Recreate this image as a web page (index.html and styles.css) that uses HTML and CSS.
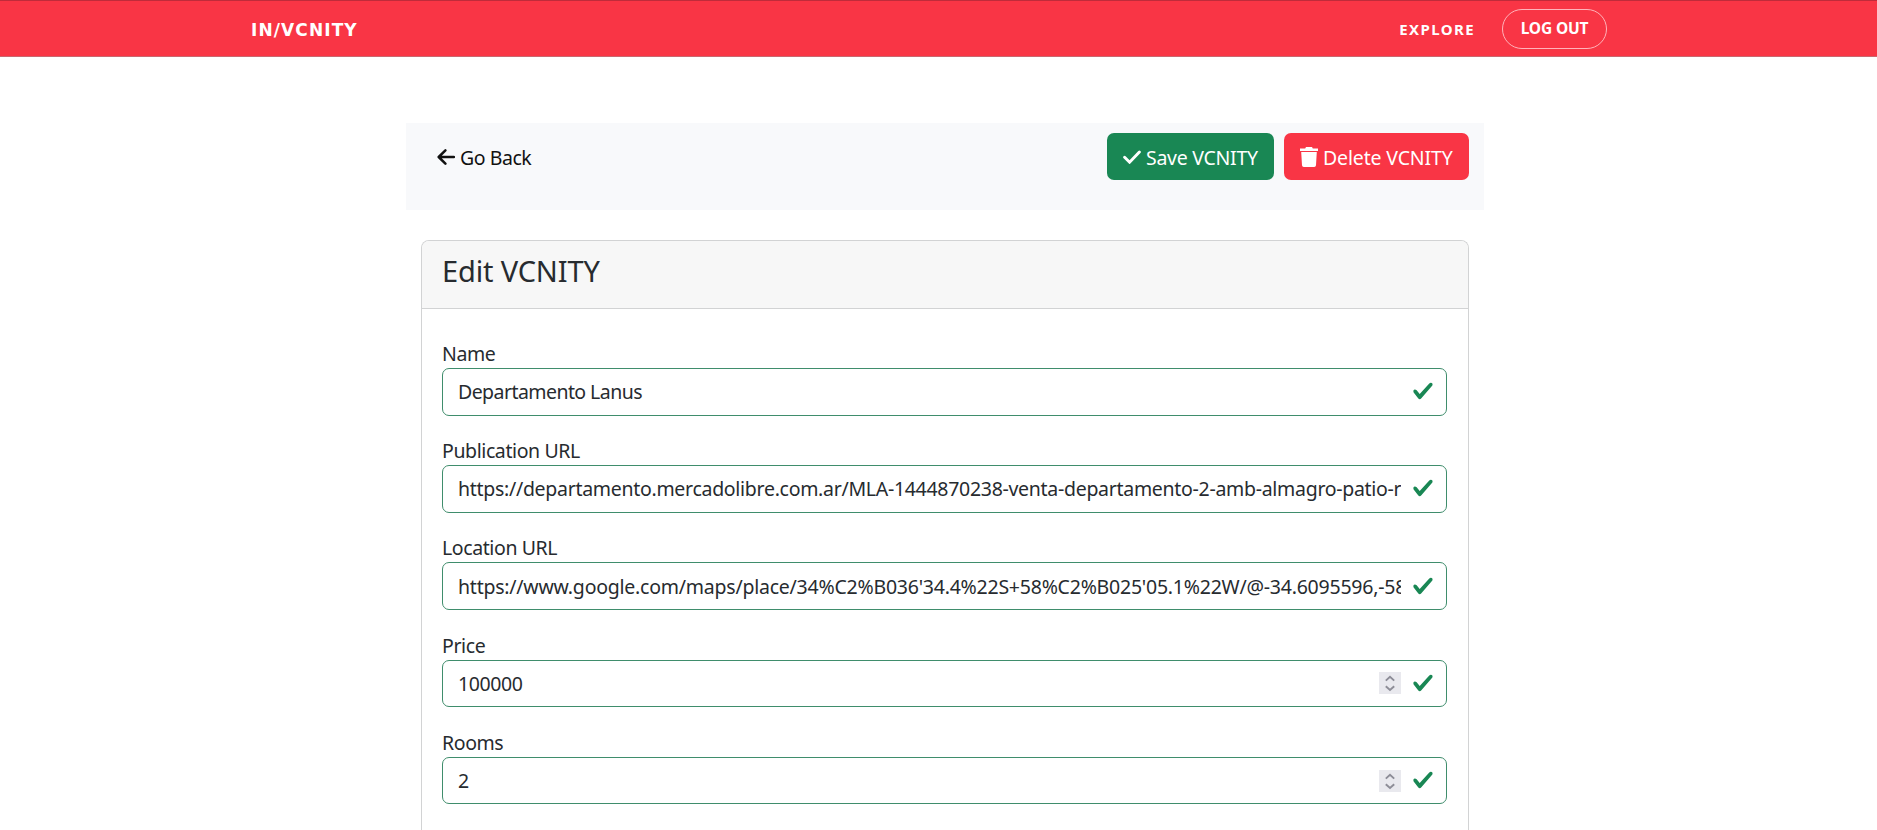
FILE: index.html
```html
<!DOCTYPE html>
<html lang="en">
<head>
<meta charset="utf-8">
<title>IN/VCNITY</title>
<link rel="stylesheet" href="styles.css">
</head>
<body>
<svg width="0" height="0" class="sprite">
  <symbol id="valid" viewBox="0 0 8 8"><path d="M2.3 6.73L.6 4.53c-.4-1.04.46-1.4 1.1-.8l1.1 1.4 3.4-3.8c.6-.63 1.6-.27 1.2.7l-4 4.6c-.43.5-.8.4-1.1.1z"/></symbol>
  <symbol id="spin" viewBox="0 0 22 22"><path d="M6.8 8.6 11 4.8l4.2 3.8M6.8 14.2l4.2 3.8 4.2-3.8" fill="none" stroke="#8d8d97" stroke-width="1.9"/></symbol>
</svg>
<nav class="navbar">
  <a class="brand">IN/VCNITY</a>
  <div class="links">
    <a class="explore">EXPLORE</a>
    <a class="logout">LOG OUT</a>
  </div>
</nav>
<main class="page">
  <div class="toolbar">
    <a class="back"><svg class="arrow" viewBox="0 0 18 18"><path d="M17 9H2M8.4 2.3 1.7 9l6.7 6.7" fill="none" stroke="currentColor" stroke-width="2.5" stroke-linecap="round" stroke-linejoin="round"/></svg><span>Go Back</span></a>
    <div class="actions">
      <button class="btn save"><svg class="tick" viewBox="0 0 18 14"><path d="m1.6 7.2 5 5L16.4 2" fill="none" stroke="currentColor" stroke-width="2.9" stroke-linecap="round"/></svg><span>Save VCNITY</span></button>
      <button class="btn delete"><svg class="trash" viewBox="0 0 18 20"><path d="M0 1.4h5.2L6 0h6l.8 1.4H18v2.5H0zM1.2 5.1h15.6L16 18.3q-.1 1.7-1.8 1.7H3.8q-1.7 0-1.8-1.7z"/></svg><span>Delete VCNITY</span></button>
    </div>
  </div>
  <section class="card">
    <header class="card-head"><h1>Edit VCNITY</h1></header>
    <form class="card-body">
      <div class="group"><label>Name</label>
        <div class="field"><input class="v-name" value="Departamento Lanus"><svg class="valid"><use href="#valid"/></svg></div></div>
      <div class="group"><label>Publication URL</label>
        <div class="field"><input class="v-pub" value="https://departamento.mercadolibre.com.ar/MLA-1444870238-venta-departamento-2-amb-almagro-patio-renta"><svg class="valid"><use href="#valid"/></svg></div></div>
      <div class="group"><label>Location URL</label>
        <div class="field"><input class="v-loc" value="https://www.google.com/maps/place/34%C2%B036'34.4%22S+58%C2%B025'05.1%22W/@-34.6095596,-58.4180"><svg class="valid"><use href="#valid"/></svg></div></div>
      <div class="group"><label>Price</label>
        <div class="field"><input value="100000"><svg class="spin"><use href="#spin"/></svg><svg class="valid"><use href="#valid"/></svg></div></div>
      <div class="group"><label>Rooms</label>
        <div class="field"><input value="2"><svg class="spin"><use href="#spin"/></svg><svg class="valid"><use href="#valid"/></svg></div></div>
    </form>
  </section>
</main>
</body>
</html>
```
FILE: styles.css
```css
* { box-sizing: border-box; }
body { margin: 0; height: 100vh; overflow: hidden; display: flex; flex-direction: column; background: #fff; color: #272b2f; font: 19.5px/30px "Noto Sans", "Open Sans", sans-serif; }
.sprite { display: block; }
svg { flex: none; }
.navbar { flex: none; height: 57px; background: #f93545; border-top: 1px solid #c02b3a; border-bottom: 1px solid #c9676f; display: flex; align-items: center; justify-content: space-between; padding: 0 270px 0 251px; color: #fff; font-weight: 700; white-space: nowrap; }
.brand { font-family: "DejaVu Sans", sans-serif; font-size: 17px; letter-spacing: 1.1px; padding-top: 2px; }
.links { display: flex; align-items: center; gap: 26px; padding-top: 1px; }
.explore { font-size: 15px; letter-spacing: 1.4px; padding: 0 1px 1px 0; }
.logout { width: 105px; height: 40px; border: 1.5px solid #ffb3ba; border-radius: 20px; font-size: 15.5px; line-height: 37px; text-align: center; letter-spacing: -.15px; }
.page { flex: 1; min-height: 0; width: 1078px; margin: 66px 0 0 406px; display: flex; flex-direction: column; }
.toolbar { flex: none; height: 87px; background: #f8f9fb; padding: 10px 15px 0 31px; display: flex; justify-content: space-between; align-items: flex-start; }
.toolbar span { padding-top: 2px; }
.back { height: 48px; display: flex; align-items: center; gap: 5px; color: #111; letter-spacing: -.45px; white-space: nowrap; }
.arrow { width: 18px; height: 18px; }
.actions { display: flex; gap: 10px; }
.btn { height: 47px; border: 0; border-radius: 7px; color: #fff; fill: #fff; font: inherit; padding: 0 0 0 16px; display: flex; align-items: center; gap: 5px; white-space: nowrap; }
.save { width: 167px; background: #198754; letter-spacing: -.27px; }
.delete { width: 185px; background: #f93545; letter-spacing: -.15px; }
.tick { width: 18px; height: 14px; }
.trash { width: 18px; height: 20px; }
.card { flex: 1; min-height: 0; overflow: hidden; width: 1048px; margin: 30px 0 0 15px; border: 1px solid #d2d3d4; border-bottom: 0; border-radius: 8px 8px 0 0; background: #fff; }
.card-head { height: 68px; background: #f7f7f7; border-bottom: 1px solid #d2d3d4; padding: 11px 20px 0; }
h1 { margin: 0; font-weight: 400; font-size: 29px; line-height: 38px; letter-spacing: -.15px; }
.card-body { padding: 29px 21px 0 20px; }
.group { height: 97.2px; }
.group:last-child { height: 78px; }
label { display: block; height: 30px; line-height: 32px; letter-spacing: -.4px; }
.field { height: 47.5px; border: 1px solid #3f8d6c; border-radius: 7px; display: flex; align-items: center; padding: 0 12px 0 15px; }
input { flex: 1; min-width: 0; height: 45px; border: 0; padding: 0; outline: 0; background: none; color: inherit; font: inherit; letter-spacing: -.4px; }
.v-name { letter-spacing: -.56px; }
.v-pub { letter-spacing: -.29px; }
.v-loc { letter-spacing: -.23px; }
.valid { width: 22px; height: 22px; margin: 0 0 1px 11px; fill: #198754; }
.spin { width: 22px; height: 22px; background: #e9e9ee; }
```
